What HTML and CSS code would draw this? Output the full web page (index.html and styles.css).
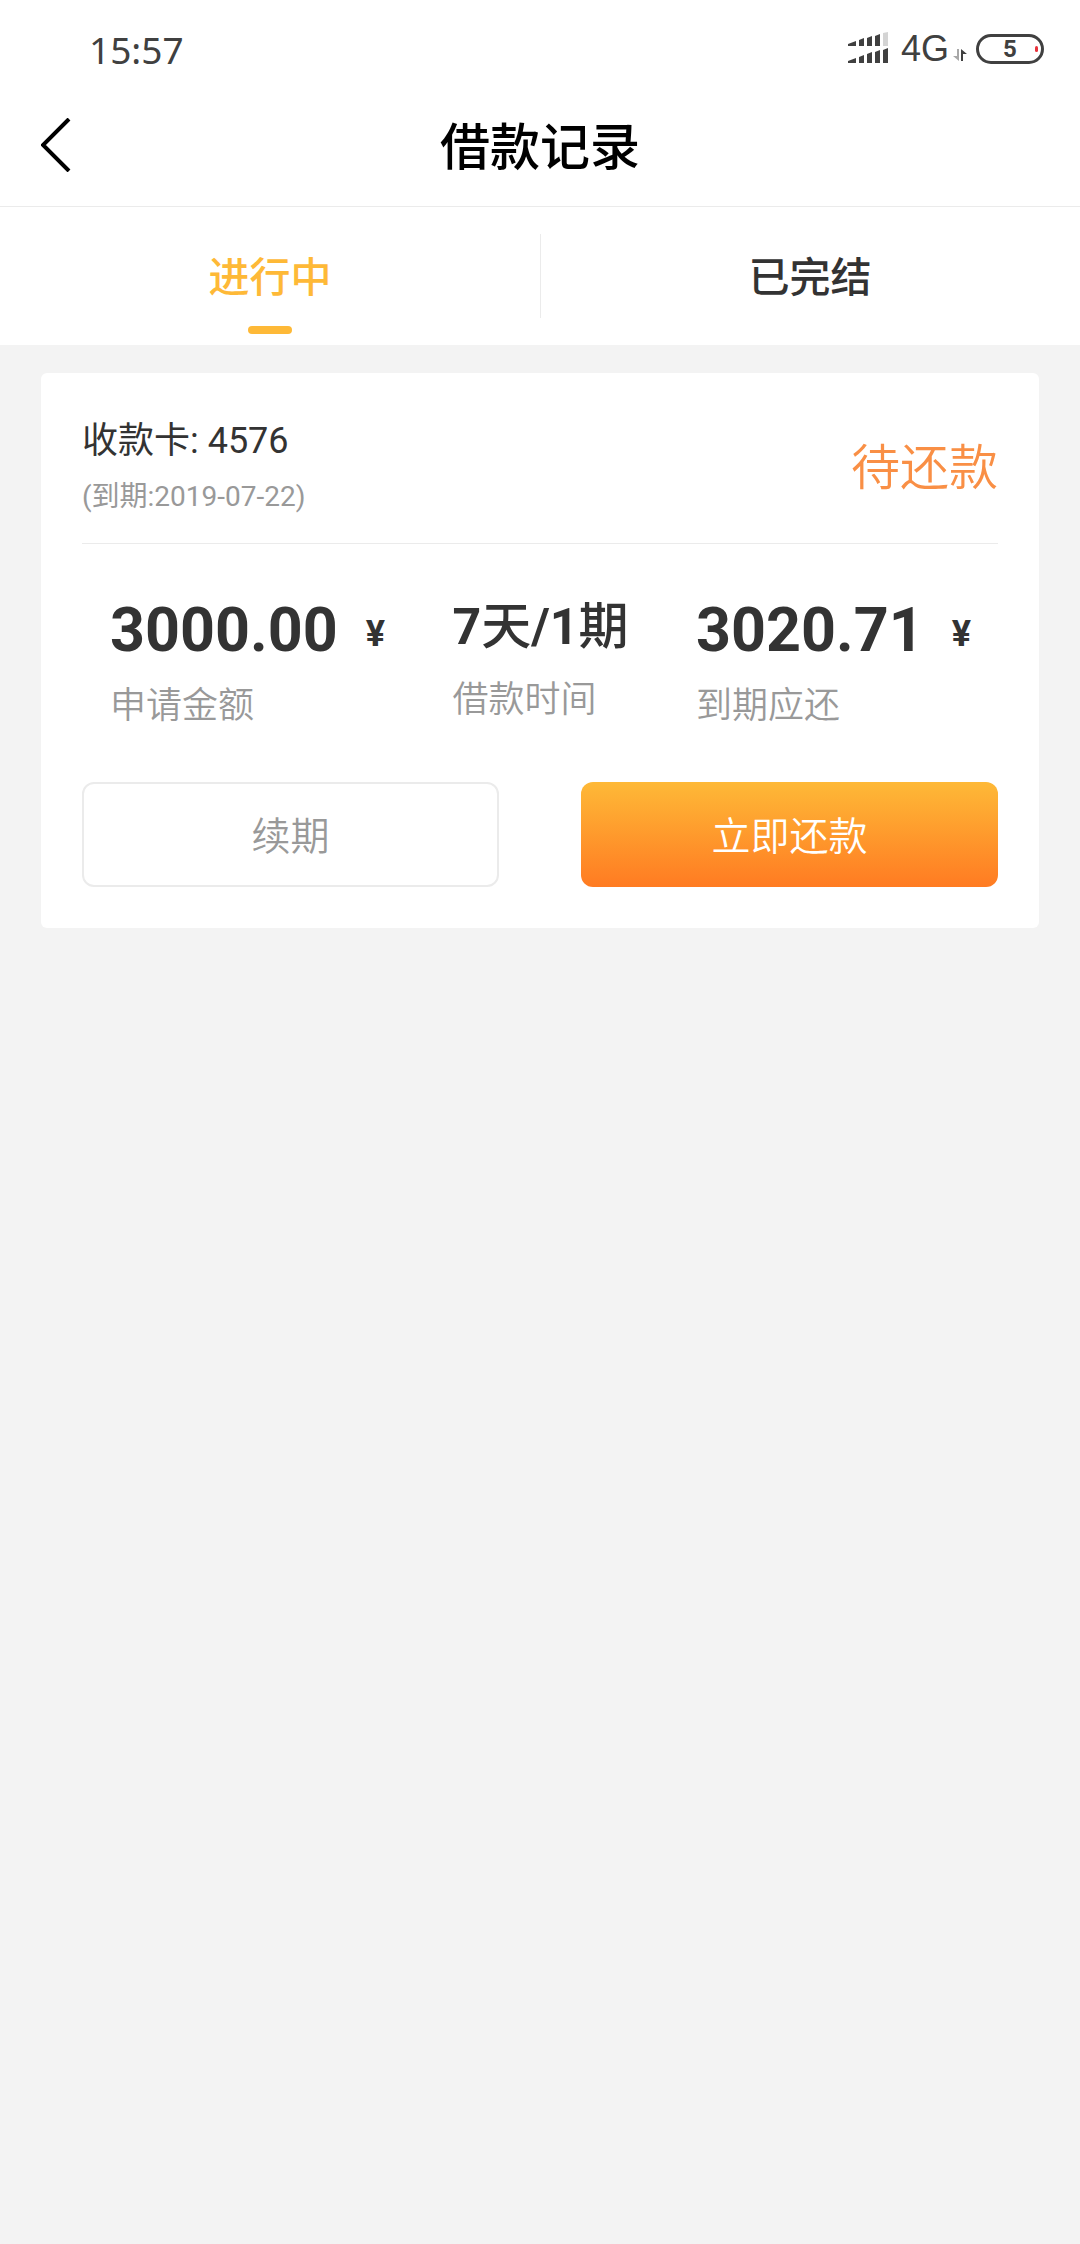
FILE: index.html
```html
<!DOCTYPE html>
<html lang="zh-CN">
<head>
  <meta charset="utf-8">
  <meta name="viewport" content="width=device-width, initial-scale=1">
  <title>借款记录</title>
  <link rel="stylesheet" href="styles.css">
</head>
<body>
  <div class="statusbar">
    <time class="clock">15:57</time>
    <div class="indicators">
      <svg class="signal" width="42" height="34" viewBox="0 0 42 34" aria-hidden="true">
        <g fill="#404040">
          <path d="M0 12l8-3v5H0zM11 8l5-2v8h-5zM19 6l5-2v10h-5zM27 4l5-2v12h-5z"/>
          <path d="M0 29l8-3v5H0zM11 25l5-2v8h-5zM19 22l5-2v11h-5zM27 20l5-2v13h-5zM35 18l5-2v15h-5z"/>
        </g>
        <path fill="#d4d4d4" d="M35 1l5-1v14h-5z"/>
      </svg>
      <span class="network">4G</span>
      <svg class="traffic" width="14" height="14" viewBox="0 0 14 14" aria-hidden="true">
        <path fill="#a8a8a8" d="M4 1h2v12L0 8h4z"/>
        <path fill="#404040" d="M8 1l6 5h-4v7H8z"/>
      </svg>
      <span class="battery"><span class="battery-level">5</span><span class="battery-charge"></span></span>
    </div>
  </div>

  <header class="navbar">
    <button class="back" type="button" aria-label="返回">
      <svg width="30" height="54" viewBox="0 0 30 54" aria-hidden="true">
        <path d="M28 1L2 27l26 26" fill="none" stroke="#000" stroke-width="4"/>
      </svg>
    </button>
    <h1 class="title">借款记录</h1>
  </header>

  <nav class="tabs">
    <a class="tab tab-active" href="#ongoing" aria-current="page">进行中</a>
    <a class="tab" href="#finished">已完结</a>
  </nav>

  <main class="content">
    <article class="card">
      <div class="card-head">
        <div>
          <p class="account">收款卡: 4576</p>
          <p class="due">(到期:2019-07-22)</p>
        </div>
        <p class="state">待还款</p>
      </div>
      <dl class="figures">
        <div class="figure">
          <dd class="amount">3000.00<span class="currency">¥</span></dd>
          <dt class="label">申请金额</dt>
        </div>
        <div class="figure">
          <dd class="period">7<span class="unit">天</span>/1<span class="unit">期</span></dd>
          <dt class="label">借款时间</dt>
        </div>
        <div class="figure">
          <dd class="amount">3020.71<span class="currency">¥</span></dd>
          <dt class="label">到期应还</dt>
        </div>
      </dl>
      <div class="actions">
        <button class="button" type="button">续期</button>
        <button class="button button-primary" type="button">立即还款</button>
      </div>
    </article>
  </main>
</body>
</html>
```

FILE: styles.css
```css
* {
  box-sizing: border-box;
}

body {
  margin: 0;
  min-height: 100vh;
  background: #f3f3f3;
  color: #333;
  font-family: Roboto, "Noto Sans CJK SC", sans-serif;
}

h1, p, dl, dd {
  margin: 0;
}

button {
  font-family: inherit;
}

.statusbar {
  display: flex;
  align-items: center;
  justify-content: space-between;
  height: 84px;
  padding: 14px 36px 0 89px;
  background: #fff;
  color: #404040;
  font-family: "Noto Sans", sans-serif;
}

.clock {
  font-size: 37px;
}

.indicators {
  display: flex;
  align-items: center;
}

.network {
  margin-left: 11px;
  font-family: "Liberation Sans", sans-serif;
  font-size: 36px;
}

.traffic {
  margin: 12px 9px 0 4px;
}

.battery {
  display: flex;
  align-items: center;
  justify-content: center;
  position: relative;
  width: 68px;
  height: 30px;
  border: 3px solid #404040;
  border-radius: 15px;
}

.battery-level {
  font-family: Roboto, sans-serif;
  font-size: 24px;
  font-weight: 700;
  line-height: 24px;
}

.battery-charge {
  position: absolute;
  right: 3px;
  width: 3px;
  height: 6px;
  border-radius: 2px;
  background: #e8333c;
}

.navbar {
  display: grid;
  grid-template-columns: 1fr auto 1fr;
  align-items: center;
  height: 123px;
  border-bottom: 1px solid #ebebeb;
  background: #fff;
}

.back {
  justify-self: start;
  display: flex;
  padding: 0 41px;
  border: 0;
  background: none;
}

.title {
  padding-top: 6px;
  color: #000;
  font-size: 50px;
  font-weight: 500;
  line-height: 60px;
}

.tabs {
  display: grid;
  grid-template-columns: 1fr 1fr;
  height: 138px;
  background: linear-gradient(#ebebeb, #ebebeb) center / 1px 84px no-repeat #fff;
}

.tab {
  display: flex;
  align-items: center;
  justify-content: center;
  position: relative;
  padding-bottom: 4px;
  color: #333;
  font-size: 41px;
  font-weight: 500;
  text-decoration: none;
}

.tab-active {
  color: #feb937;
}

.tab-active::after {
  content: "";
  position: absolute;
  bottom: 11px;
  width: 44px;
  height: 8px;
  border-radius: 4px;
  background: #feb937;
}

.content {
  padding: 28px 41px;
}

.card {
  padding: 41px;
  border-radius: 6px;
  background: #fff;
}

.card-head {
  display: flex;
  align-items: center;
  justify-content: space-between;
  padding-bottom: 25px;
  border-bottom: 1px solid #ebebeb;
}

.account {
  font-size: 36px;
  line-height: 54px;
}

.due {
  margin-top: 8px;
  color: #999;
  font-size: 28px;
  line-height: 42px;
}

.state {
  padding-top: 6px;
  color: #f98f45;
  font-size: 49px;
  font-weight: 350;
  line-height: 60px;
}

.figures {
  display: flex;
  justify-content: space-between;
  padding: 50px 27px 49px 28px;
}

.amount {
  display: flex;
  align-items: center;
  font-size: 61px;
  font-weight: 700;
  line-height: 72px;
}

.currency {
  margin-left: 28px;
  padding-top: 8px;
  font-size: 36px;
  line-height: 42px;
}

.period {
  font-size: 50px;
  font-weight: 700;
  line-height: 66px;
}

.unit {
  font-weight: 500;
}

.label {
  margin-top: 13px;
  color: #999;
  font-size: 36px;
  font-weight: 350;
  line-height: 54px;
}

.actions {
  display: grid;
  grid-template-columns: 1fr 1fr;
  gap: 82px;
}

.button {
  height: 105px;
  padding: 0 0 3px;
  border: 2px solid #ebebeb;
  border-radius: 12px;
  background: #fff;
  color: #999;
  font-size: 39px;
  font-weight: 350;
}

.button-primary {
  border: 0;
  background: linear-gradient(#feb937, #ff7b22);
  color: #fff;
}
```
